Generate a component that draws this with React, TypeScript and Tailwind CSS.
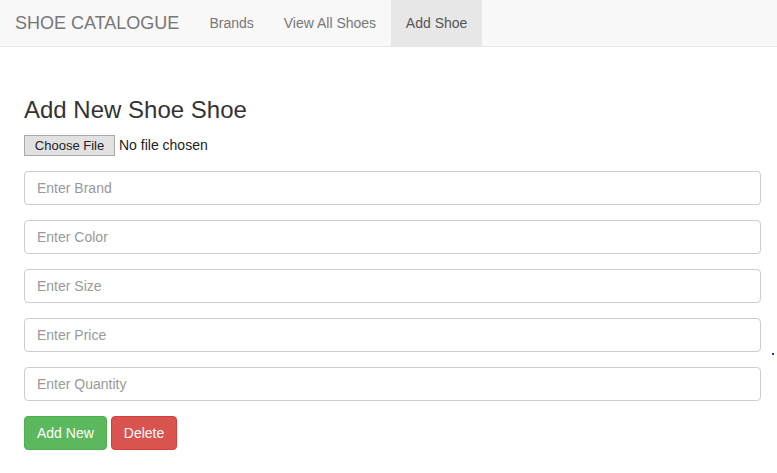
import React from 'react';

const fields = ['Enter Brand', 'Enter Color', 'Enter Size', 'Enter Price', 'Enter Quantity'];

export default function App() {
  return (
    <div className="relative min-h-[473px] bg-white font-['Liberation_Sans',Arial,sans-serif] text-[14px] text-[#333]">
      <nav className="flex h-[47px] items-stretch border-b border-[#e7e7e7] bg-[#f8f8f8]">
        <a className="flex items-center pl-[15px] pr-[15px] text-[18px] text-[#777]">SHOE CATALOGUE</a>
        <a className="flex items-center px-[15px] text-[#777]">Brands</a>
        <a className="flex items-center px-[15px] text-[#777]">View All Shoes</a>
        <a className="flex w-[91px] items-center justify-center bg-[#e7e7e7] text-[#555]">Add Shoe</a>
      </nav>

      <div className="pl-6 pr-4">
        <h3 className="mt-[50px] text-[24px] leading-[26px] text-[#333]">Add New Shoe Shoe</h3>

        <div className="mt-[12px] flex h-[21px] items-center gap-1">
          <span className="flex h-[21px] w-[91px] items-center justify-center border border-[#a9a9a9] bg-[#e1e1e1] text-[13px] text-[#222]">
            Choose File
          </span>
          <span className="text-[14px] text-[#222]">No file chosen</span>
        </div>

        <div className="mt-[15px] flex flex-col gap-[15px]">
          {fields.map((f) => (
            <input
              key={f}
              placeholder={f}
              className="h-[34px] w-full rounded-[4px] border border-[#ccc] px-3 text-[14px] text-[#555] outline-none placeholder:text-[#999]"
            />
          ))}
        </div>

        <div className="mt-[15px] flex gap-1">
          <button className="h-[34px] rounded-[4px] border border-[#4cae4c] bg-[#5cb85c] px-3 text-[14px] text-white">
            Add New
          </button>
          <button className="h-[34px] rounded-[4px] border border-[#d43f3a] bg-[#d9534f] px-3 text-[14px] text-white">
            Delete
          </button>
        </div>
      </div>

      <span className="absolute left-[772px] top-[353px] h-[2px] w-[2px] bg-[#2a2aff]" />
    </div>
  );
}
